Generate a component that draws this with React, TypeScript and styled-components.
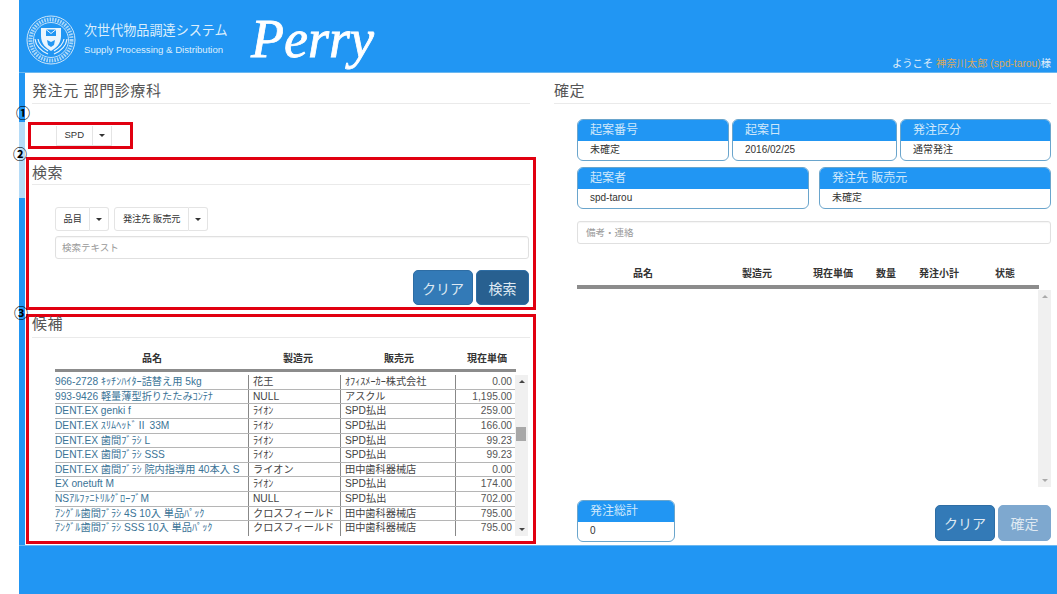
import React from "react";
import styled, { createGlobalStyle } from "styled-components";

const Global = createGlobalStyle`
  html, body { margin: 0; padding: 0; background: #fff; }
  body { font-family: "Liberation Sans", "Noto Sans CJK JP", sans-serif; color: #333; }
`;

const Page = styled.div`
  width: 1057px; height: 594px; overflow: hidden; position: relative;
  padding-left: 19px; box-sizing: border-box; display: flex; flex-direction: column;
`;
const Header = styled.header`
  height: 72px; flex: none; background: #2196f3; position: relative; display: flex; align-items: flex-start;
  padding-left: 7px; border-bottom: 1px solid #6cb8f0; box-sizing: content-box;
`;
const Brand = styled.div`
  display: flex; flex-direction: column; margin: 21px 0 0 8px; color: #dceefc; width: 168px;
`;
const BrandJa = styled.div`font-size: 13.1px; line-height: 20px; white-space: nowrap;`;
const BrandEn = styled.div`font-size: 9.6px; line-height: 12px; margin-top: 3px; white-space: nowrap;`;
const Logo = styled.div`
  font-family: "Liberation Serif", serif; font-style: italic; font-weight: 400; font-size: 54px; line-height: 60px;
  color: #fff; margin: 9px 0 0 -1px; -webkit-text-stroke: 0.8px #fff;
`;
const Welcome = styled.div`
  position: absolute; right: 6px; bottom: 2px; font-size: 10.3px; line-height: 12px; color: #e4f1fb; white-space: nowrap;
`;
const Accent = styled.span`color: #d6a860;`;

const Main = styled.main`
  flex: none; height: 472px; display: flex;
`;
const Strip = styled.div`
  width: 6px; flex: none;
  background: linear-gradient(#2196f3 0 49px, #b5dcf8 49px 125px, #2196f3 125px);
`;
const LeftCol = styled.section`width: 510px; margin-left: 1px; flex: none; display: flex; flex-direction: column;`;
const Heading = styled.h2`
  margin: 0 6px; font-weight: 400; color: #555; font-size: 15px; line-height: 20px; padding: 8px 0 2px;
  border-bottom: 1px solid #eaeaea; letter-spacing: 0.6px;
`;
const RedBox = styled.div`border: 3px solid #e10010; box-sizing: border-box;`;
const DeptBox = styled(RedBox)`
  width: 105px; height: 27px; margin: 18px 0 0 2px; padding: 1px 0 0 25px; display: flex; align-items: flex-start;
`;
const SearchBox = styled(RedBox)`height: 153px; margin-top: 8px;`;
const CandidateBox = styled(RedBox)`height: 230px; margin-top: 4px;`;
const SearchHeading = styled(Heading)`margin: 0 3px; padding: 3px 0 1px;`;
const CandidateHeading = styled(Heading)`margin: 0 3px; padding: 0 0 6px; line-height: 14px;`;

const Split = styled.div`display: inline-flex; height: 24px; background: #fff;`;
const SplitMain = styled.div`
  border: 1px solid #e4e4e4; border-radius: 3px 0 0 3px; padding: 0 7.5px; font-size: 9.2px; line-height: 22px; color: #333; white-space: nowrap;
`;
const SplitCaret = styled.div`
  border: 1px solid #e4e4e4; border-left: 0; border-radius: 0 3px 3px 0; width: 18px; display: flex; align-items: center; justify-content: center;
  &::after { content: ""; border-top: 3px solid #333; border-left: 3px solid transparent; border-right: 3px solid transparent; }
`;
const DeptSplit = styled(Split)`height: 20px;`;
const DeptMain = styled(SplitMain)`line-height: 18px; font-size: 9.5px; border-top: 0; border-radius: 0;`;
const DeptCaret = styled(SplitCaret)`border-top: 0; border-radius: 0;`;

const SearchBody = styled.div`padding: 22px 4px 0 26px; display: flex; flex-direction: column;`;
const FilterRow = styled.div`display: flex; gap: 5px;`;
const TextBox = styled.div`
  height: 23px; box-sizing: border-box; border: 1px solid #e0e0e0; border-radius: 3px; font-size: 9.5px; line-height: 21px; color: #999; padding-left: 6px;
  box-shadow: inset 0 1px 1px rgba(0,0,0,.04);
`;
const SearchInput = styled(TextBox)`margin-top: 5px;`;
const ButtonRow = styled.div`display: flex; justify-content: flex-end; gap: 3px; margin-top: 11px;`;
const Btn = styled.button<{ $bg: string; $w: number; $h: number }>`
  width: ${p => p.$w}px; height: ${p => p.$h}px; background: ${p => p.$bg}; border: 1px solid #2e6da4; border-radius: 5px;
  color: #dfe9f2; font-family: inherit; font-size: 14px; padding: 0;
`;
const FadedBtn = styled(Btn)`border-color: #7ea8cf;`;

const TableWrap = styled.div`padding: 14px 5px 0 26px;`;
const THead = styled.div<{ $cols: string; $w: number }>`
  display: grid; grid-template-columns: ${p => p.$cols}; width: ${p => p.$w}px; box-sizing: border-box;
  font-size: 10px; font-weight: 700; color: #333; text-align: center; line-height: 14px;
  border-bottom: 3px solid #8c8c8c; padding-bottom: 3px;
`;
const ScrollArea = styled.div`display: flex; margin-top: 3px;`;
const Rows = styled.div`flex: 1; min-width: 0;`;
const Row = styled.div`
  display: grid; grid-template-columns: 193px 92px 115px 58px; height: 14.65px; box-sizing: border-box; border-bottom: 1px solid #b5b5b5;
  font-size: 10.2px; line-height: 13.6px; white-space: nowrap; color: #444;
  &:last-child { border-bottom: 0; }
`;
const Name = styled.div`color: #3a7396; overflow: hidden;`;
const Cell = styled.div`border-left: 1px solid #888; padding-left: 4px; overflow: hidden;`;
const Price = styled(Cell)`text-align: right; padding: 0 1px 0 0; color: #555;`;
const Scrollbar = styled.div<{ $h: number }>`
  width: 13px; height: ${p => p.$h}px; flex: none; background: #f0f0f0; position: relative; display: flex; flex-direction: column; justify-content: space-between; align-items: center; padding: 5px 0; box-sizing: border-box;
`;
const Arrow = styled.div<{ $up?: boolean; $c: string }>`
  width: 0; height: 0; border-left: 3px solid transparent; border-right: 3px solid transparent;
  ${p => p.$up ? `border-bottom: 3px solid ${p.$c};` : `border-top: 3px solid ${p.$c};`}
`;
const Thumb = styled.div`position: absolute; left: 1px; top: 52px; width: 10px; height: 14px; background: #a8a8a8;`;

const RightCol = styled.section`flex: 1; margin: 0 6px 0 18px; display: flex; flex-direction: column; min-width: 0;`;
const RightHeading = styled(Heading)`margin: 0;`;
const RightBody = styled.div`padding: 15px 0 0 23px; display: flex; flex-direction: column;`;
const CardRow = styled.div<{ $cols: string }>`display: grid; grid-template-columns: ${p => p.$cols}; justify-content: space-between; margin-bottom: 6px;`;
const Card = styled.div`
  border: 1px solid #6aa5cc; border-radius: 6px; overflow: hidden; background: #fff; height: 42px; box-sizing: border-box;
`;
const CardTitle = styled.div`background: #2196f3; color: #cfe8fb; height: 21px; font-size: 12px; line-height: 20px; padding-left: 12px; white-space: nowrap;`;
const CardValue = styled.div`font-size: 10px; line-height: 18px; padding-left: 12px; color: #333;`;
const Memo = styled(TextBox)`margin-top: 6px; padding-left: 8px;`;
const RightTable = styled.div`margin-top: 23px;`;
const RightHead = styled(THead)`border-bottom-width: 4px; padding-bottom: 4px;`;
const ScrollRow = styled.div`display: flex; justify-content: flex-end; margin-top: 1px;`;
const Bottom = styled.div`display: flex; justify-content: space-between; align-items: flex-end; margin-top: 13px;`;
const TotalCard = styled(Card)`width: 98px;`;
const Actions = styled.div`display: flex; gap: 3px; padding-bottom: 1px;`;

const Footer = styled.footer`flex: 1; background: #2196f3; border-top: 1px solid #6cb8f0;`;

const Mark = styled.div<{ $x: number; $y: number }>`
  position: absolute; left: ${p => p.$x}px; top: ${p => p.$y}px; width: 14px; height: 14px;
  font-size: 14px; line-height: 14px; text-align: center; font-weight: 700; color: #000;
`;

const rows: [string, string, string, string][] = [
  ["966-2728 ｷｯﾁﾝﾊｲﾀｰ詰替え用 5kg", "花王", "ｵﾌｨｽﾒｰｶｰ株式会社", "0.00"],
  ["993-9426 軽量薄型折りたたみｺﾝﾃﾅ", "NULL", "アスクル", "1,195.00"],
  ["DENT.EX genki f", "ﾗｲｵﾝ", "SPD払出", "259.00"],
  ["DENT.EX ｽﾘﾑﾍｯﾄﾞⅡ 33M", "ﾗｲｵﾝ", "SPD払出", "166.00"],
  ["DENT.EX 歯間ﾌﾞﾗｼ L", "ﾗｲｵﾝ", "SPD払出", "99.23"],
  ["DENT.EX 歯間ﾌﾞﾗｼ SSS", "ﾗｲｵﾝ", "SPD払出", "99.23"],
  ["DENT.EX 歯間ﾌﾞﾗｼ 院内指導用 40本入 S", "ライオン", "田中歯科器械店", "0.00"],
  ["EX onetuft M", "ﾗｲｵﾝ", "SPD払出", "174.00"],
  ["NSｱﾙﾌｧﾆﾄﾘﾙｸﾞﾛｰﾌﾞM", "NULL", "SPD払出", "702.00"],
  ["ｱﾝｸﾞﾙ歯間ﾌﾞﾗｼ 4S 10入 単品ﾊﾟｯｸ", "クロスフィールド", "田中歯科器械店", "795.00"],
  ["ｱﾝｸﾞﾙ歯間ﾌﾞﾗｼ SSS 10入 単品ﾊﾟｯｸ", "クロスフィールド", "田中歯科器械店", "795.00"],
];

const EmblemSvg = styled.svg`margin-top: 15px; flex: none;`;
const Emblem = () => (
  <EmblemSvg width="50" height="50" viewBox="0 0 50 50">
    <circle cx="25" cy="25" r="24" fill="none" stroke="#cfe6f8" strokeWidth="1" />
    <circle cx="25" cy="25" r="20.5" fill="none" stroke="#d8ecfa" strokeWidth="4" strokeDasharray="1.6 1.1" opacity=".75" />
    <circle cx="25" cy="25" r="17.5" fill="none" stroke="#e8f4fc" strokeWidth=".8" />
    <path d="M15 13h20v8c0 8-5 12-10 15-5-3-10-7-10-15z" fill="#eaf5fd" />
    <rect x="20" y="14.5" width="10" height="6.5" fill="#2196f3" />
    <path d="M20 14.5l5 4 5-4M16 23h18" stroke="#eaf5fd" strokeWidth="1" fill="none" />
    <path d="M21 25l4 2 4-2-1 5-3 2-3-2z" fill="#2196f3" />
    <path d="M9 24c1 8 6 12 13 15M41 24c-1 8-6 12-13 15M12 24c1 6 5 9 10 12M38 24c-1 6-5 9-10 12" stroke="#eaf5fd" strokeWidth="1.2" fill="none" />
  </EmblemSvg>
);

export default function App() {
  return (
    <Page>
      <Global />
      <Header>
        <Emblem />
        <Brand>
          <BrandJa>次世代物品調達システム</BrandJa>
          <BrandEn>Supply Processing &amp; Distribution</BrandEn>
        </Brand>
        <Logo>Perry</Logo>
        <Welcome>ようこそ <Accent>神奈川太郎 (spd-tarou)</Accent>様</Welcome>
      </Header>
      <Main>
        <Strip />
        <LeftCol>
          <Heading>発注元 部門診療科</Heading>
          <DeptBox>
            <DeptSplit>
              <DeptMain>SPD</DeptMain>
              <DeptCaret />
            </DeptSplit>
          </DeptBox>
          <SearchBox>
            <SearchHeading>検索</SearchHeading>
            <SearchBody>
              <FilterRow>
                <Split><SplitMain>品目</SplitMain><SplitCaret /></Split>
                <Split><SplitMain>発注先 販売元</SplitMain><SplitCaret /></Split>
              </FilterRow>
              <SearchInput>検索テキスト</SearchInput>
              <ButtonRow>
                <Btn $bg="#337ab7" $w={60} $h={35}>クリア</Btn>
                <Btn $bg="#286090" $w={53} $h={35}>検索</Btn>
              </ButtonRow>
            </SearchBody>
          </SearchBox>
          <CandidateBox>
            <CandidateHeading>候補</CandidateHeading>
            <TableWrap>
              <THead $cols="194px 98px 104px 72px" $w={461}>
                <div>品名</div><div>製造元</div><div>販売元</div><div>現在単価</div>
              </THead>
              <ScrollArea>
                <Rows>
                  {rows.map((r, i) => (
                    <Row key={i}>
                      <Name>{r[0]}</Name>
                      <Cell>{r[1]}</Cell>
                      <Cell>{r[2]}</Cell>
                      <Price>{r[3]}</Price>
                    </Row>
                  ))}
                </Rows>
                <Scrollbar $h={161}>
                  <Arrow $up $c="#444" />
                  <Thumb />
                  <Arrow $c="#444" />
                </Scrollbar>
              </ScrollArea>
            </TableWrap>
          </CandidateBox>
        </LeftCol>
        <RightCol>
          <RightHeading>確定</RightHeading>
          <RightBody>
            <CardRow $cols="152px 165px 151px">
              <Card><CardTitle>起案番号</CardTitle><CardValue>未確定</CardValue></Card>
              <Card><CardTitle>起案日</CardTitle><CardValue>2016/02/25</CardValue></Card>
              <Card><CardTitle>発注区分</CardTitle><CardValue>通常発注</CardValue></Card>
            </CardRow>
            <CardRow $cols="232px 232px">
              <Card><CardTitle>起案者</CardTitle><CardValue>spd-tarou</CardValue></Card>
              <Card><CardTitle>発注先 販売元</CardTitle><CardValue>未確定</CardValue></Card>
            </CardRow>
            <Memo>備考・連絡</Memo>
            <RightTable>
              <RightHead $cols="132px 96px 56px 50px 56px 76px" $w={462}>
                <div>品名</div><div>製造元</div><div>現在単価</div><div>数量</div><div>発注小計</div><div>状態</div>
              </RightHead>
              <ScrollRow>
                <Scrollbar $h={197}>
                  <Arrow $up $c="#aaa" />
                  <Arrow $c="#aaa" />
                </Scrollbar>
              </ScrollRow>
            </RightTable>
            <Bottom>
              <TotalCard><CardTitle>発注総計</CardTitle><CardValue>0</CardValue></TotalCard>
              <Actions>
                <Btn $bg="#337ab7" $w={60} $h={36}>クリア</Btn>
                <FadedBtn $bg="#7ea8cf" $w={53} $h={36}>確定</FadedBtn>
              </Actions>
            </Bottom>
          </RightBody>
        </RightCol>
      </Main>
      <Footer />
      <Mark $x={16} $y={106}>①</Mark>
      <Mark $x={13} $y={147}>②</Mark>
      <Mark $x={14} $y={306}>③</Mark>
    </Page>
  );
}
